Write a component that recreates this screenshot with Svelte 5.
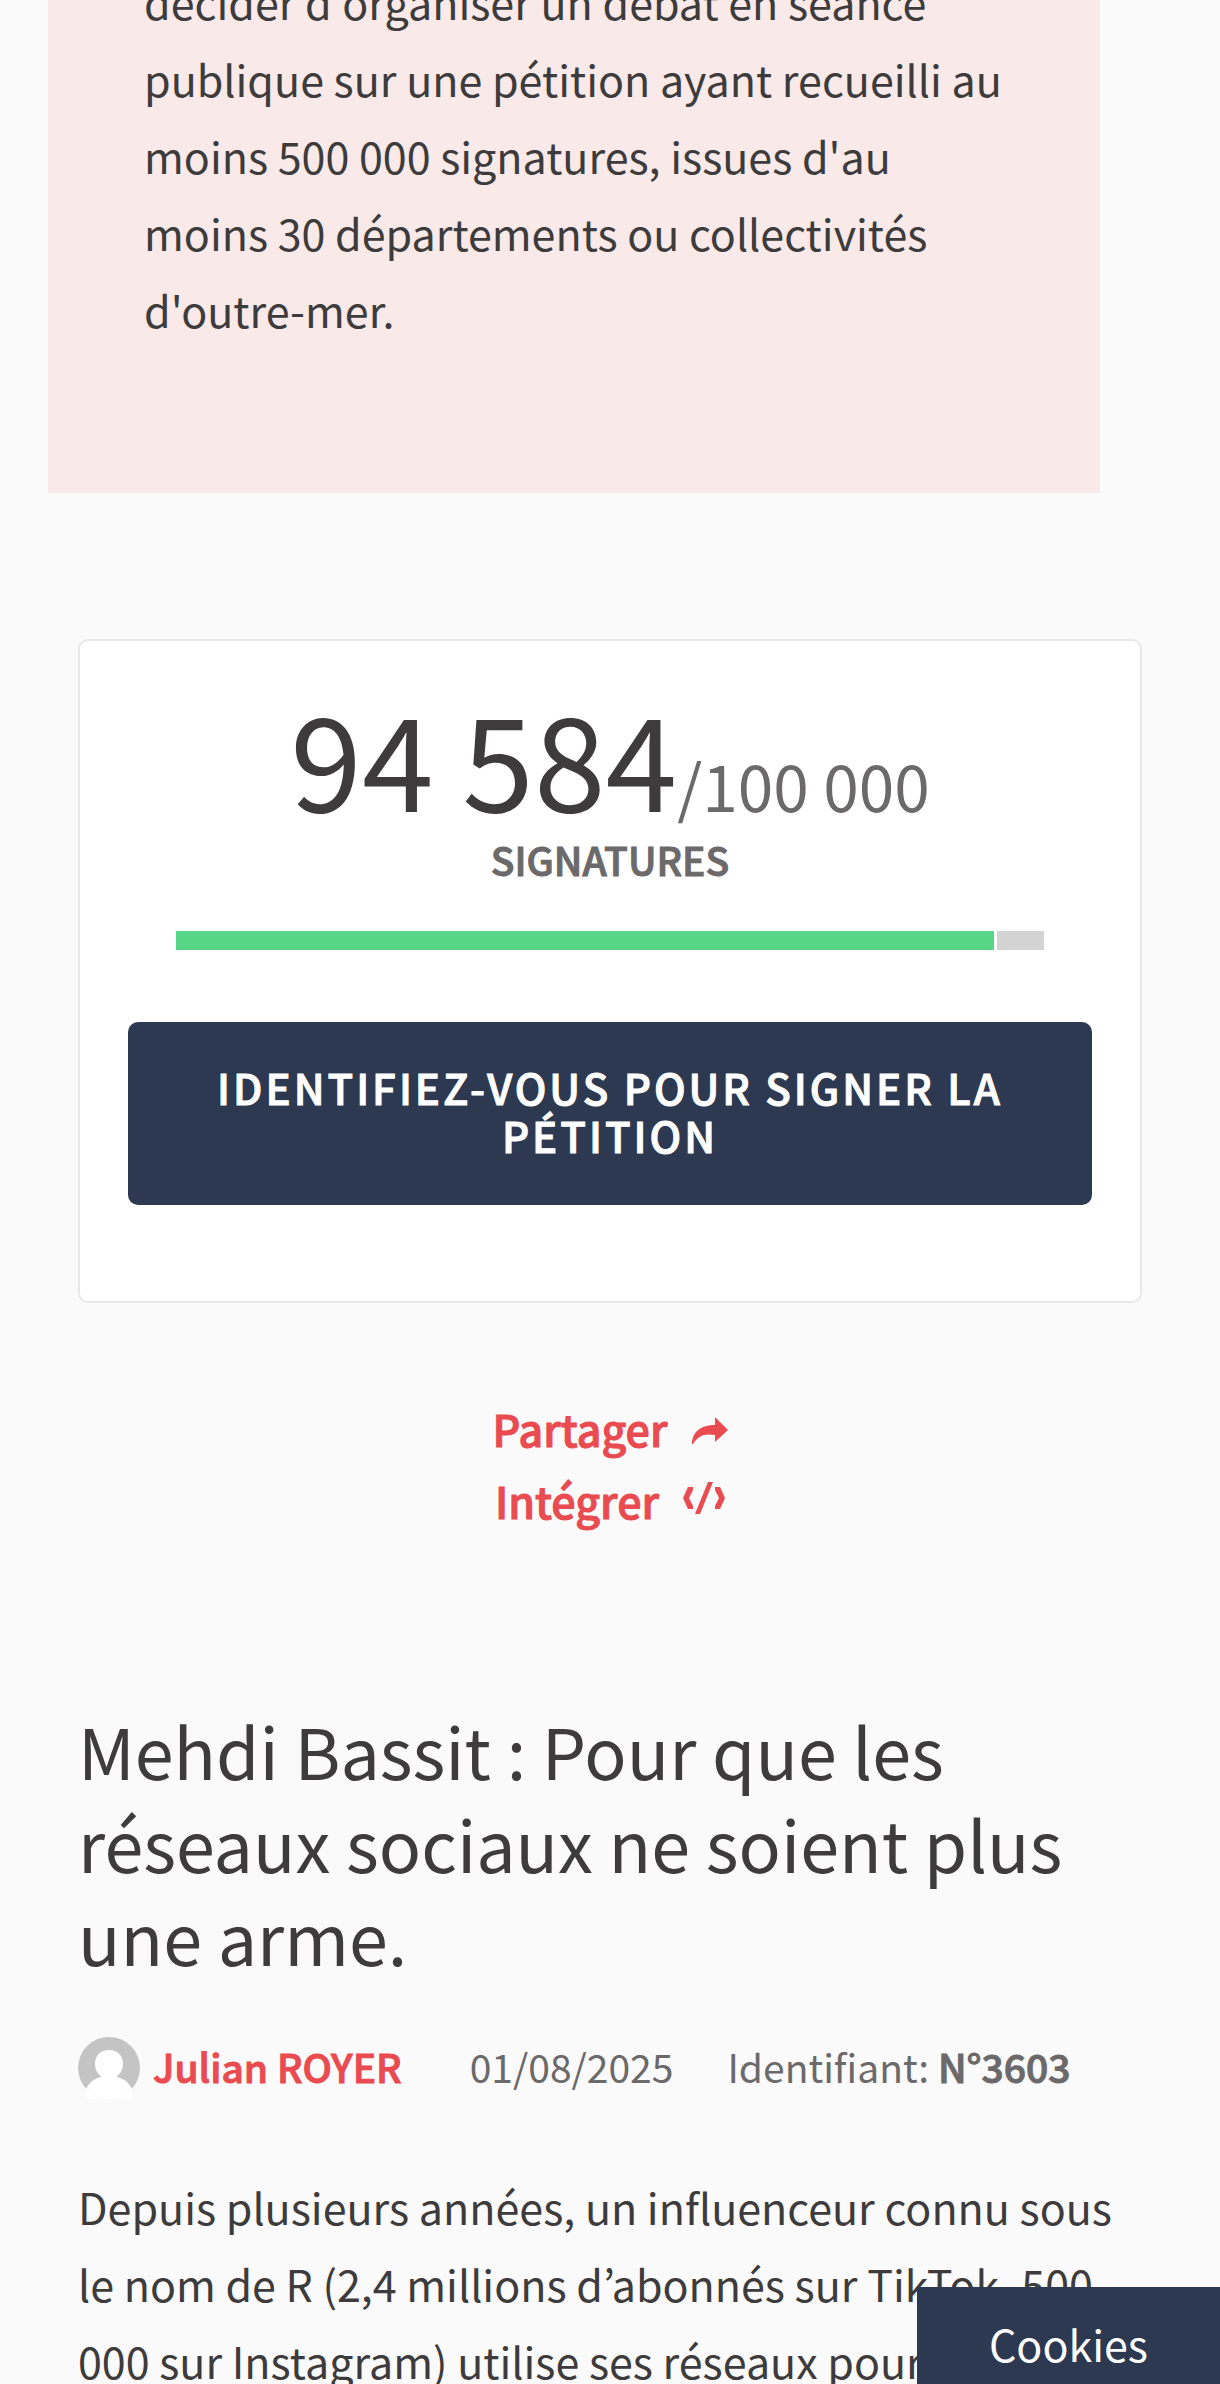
<script lang="ts">
	const petition = {
		title: 'Mehdi Bassit : Pour que les réseaux sociaux ne soient plus une arme.',
		author: 'Julian ROYER',
		date: '01/08/2025',
		reference: 'N°3603',
		votes: 94584,
		goal: 100000
	};

	let progress = $derived((petition.votes / petition.goal) * 100);

	function formatCount(value: number) {
		return String(value).replace(/\B(?=(\d{3})+$)/g, ' ');
	}
</script>

<div class="page">
	<!-- Rules callout -->
	<aside class="callout">
		<p>
			décider d'organiser un débat en séance publique sur une pétition ayant recueilli au
			moins 500 000 signatures, issues d'au moins 30 départements ou collectivités
			d'outre-mer.
		</p>
	</aside>

	<main class="content">
		<!-- Signatures -->
		<section class="card">
			<div class="count">
				{formatCount(petition.votes)}<span class="count-goal">/{formatCount(petition.goal)}</span>
			</div>
			<div class="count-label semibold">SIGNATURES</div>
			<div class="progress" role="progressbar" aria-label="Signatures" aria-valuenow={petition.votes} aria-valuemin="0" aria-valuemax={petition.goal}>
				<div class="progress-fill" style="width: {progress}%"></div>
			</div>
			<button class="btn-sign semibold" type="button">IDENTIFIEZ-VOUS POUR SIGNER LA PÉTITION</button>
		</section>

		<!-- Share links -->
		<div class="share">
			<a href="#share" class="share-link semibold">
				<span>Partager</span>
				<svg class="icon" viewBox="0 0 36 32" aria-hidden="true">
					<path d="M23 5 L36 18 L23 30 V23 C12 21 6 24 1 32 H0 C0 20 9 13 23 13 Z" fill="currentColor" />
				</svg>
			</a>
			<a href="#embed" class="share-link semibold">
				<span>Intégrer</span>
				<svg class="icon icon-wide" viewBox="0 0 42 32" aria-hidden="true">
					<path d="M5 3 H10 V6 L6 14 L10 22 V25 H5 L0 14 Z" fill="currentColor" />
					<path d="M37 3 H32 V6 L36 14 L32 22 V25 H37 L42 14 Z" fill="currentColor" />
					<path d="M25 -2 H30 L17 30 H12 Z" fill="currentColor" />
				</svg>
			</a>
		</div>

		<!-- Petition -->
		<article>
			<h1 class="title">{petition.title}</h1>
			<div class="meta">
				<a href="#author" class="author semibold">
					<svg class="avatar" viewBox="0 0 62 62" aria-hidden="true">
						<circle cx="31" cy="31" r="31" fill="#c4c4c4" />
						<path d="M31 13 C39 13 45 18 45 27 C45 33 42 37 39 39 V40 C47 42 51 46 54 52 A31 31 0 0 1 8 52 C11 46 15 42 23 40 V39 C20 37 17 33 17 27 C17 18 23 13 31 13 Z" fill="#ffffff" />
						<path d="M8 52 A31 31 0 0 0 54 52 V62 H8 Z" fill="#ffffff" />
					</svg>
					<span>{petition.author}</span>
				</a>
				<span class="date">{petition.date}</span>
				<span>Identifiant: <strong class="semibold">{petition.reference}</strong></span>
			</div>
			<p>
				Depuis plusieurs années, un influenceur connu sous le nom de R (2,4 millions
				d’abonnés sur TikTok, 500 000 sur Instagram) utilise ses réseaux pour
			</p>
		</article>
	</main>

	<button class="btn-cookies" type="button">Cookies</button>
</div>

<style>
	:global(body) {
		background: #fafafa;
	}

	.page {
		height: 100vh;
		overflow: hidden;
		background: #fafafa;
		color: #3d3b3c;
		font-family: 'Noto Sans CJK KR', 'Open Sans', sans-serif;
		font-size: 43px;
		line-height: 77px;
	}

	p {
		margin: 0;
	}

	a {
		color: #e94b50;
		text-decoration: none;
	}

	/* The family has no 600 weight, so thicken the medium one */
	.semibold {
		font-weight: 500;
		-webkit-text-stroke: 1px currentColor;
	}

	/* Callout */
	.callout {
		margin: -37px 120px 0 48px;
		padding: 0 96px 145px;
		background: #f9e9e9;
	}

	/* Content */
	.content {
		padding: 146px 78px 0;
	}

	.card {
		display: flex;
		flex-direction: column;
		padding: 48px 48px 96px;
		background: #fff;
		border: 2px solid #e8e8e8;
		border-radius: 10px;
		text-align: center;
	}

	.count {
		font-size: 129px;
		line-height: 134px;
		white-space: nowrap;
	}

	.count-goal {
		font-size: 64px;
		line-height: 64px;
		color: #6b6969;
	}

	.count-label {
		margin-top: 12px;
		font-size: 39px;
		line-height: 48px;
		color: #6b6969;
	}

	.progress {
		height: 19px;
		margin: 48px 48px 72px;
		background: #d3d3d3;
	}

	.progress-fill {
		box-sizing: border-box;
		height: 100%;
		background: #57d685;
		border-right: 3px solid #fff;
	}

	.btn-sign {
		padding: 41px 48px 46px;
		background: #2c3951;
		border: none;
		border-radius: 10px;
		color: #fff;
		font-family: inherit;
		font-size: 42px;
		line-height: 48px;
		letter-spacing: 3px;
		cursor: pointer;
	}

	/* Share */
	.share {
		display: flex;
		flex-direction: column;
		align-items: center;
		margin: 89px 0 167px;
	}

	.share-link {
		display: flex;
		align-items: center;
		gap: 24px;
		line-height: 72px;
	}

	.icon {
		width: 36px;
		height: 32px;
		overflow: visible;
	}

	.icon-wide {
		width: 42px;
	}

	/* Petition */
	.title {
		margin: 0 0 55px;
		font-size: 70px;
		font-weight: 400;
		line-height: 93px;
	}

	.meta {
		display: flex;
		align-items: flex-start;
		margin-bottom: 69px;
		font-size: 39px;
		line-height: 58px;
		color: #6b6969;
		white-space: nowrap;
	}

	.author {
		display: flex;
		align-items: flex-start;
		gap: 13px;
	}

	.avatar {
		width: 62px;
		height: 62px;
	}

	.date {
		margin: 0 54px 0 68px;
	}

	/* Cookies */
	.btn-cookies {
		position: fixed;
		right: 0;
		bottom: 0;
		padding: 18px 72px 2px;
		background: #2c3951;
		border: none;
		color: #fff;
		font-family: inherit;
		font-size: 43px;
		line-height: 77px;
		cursor: pointer;
	}
</style>
